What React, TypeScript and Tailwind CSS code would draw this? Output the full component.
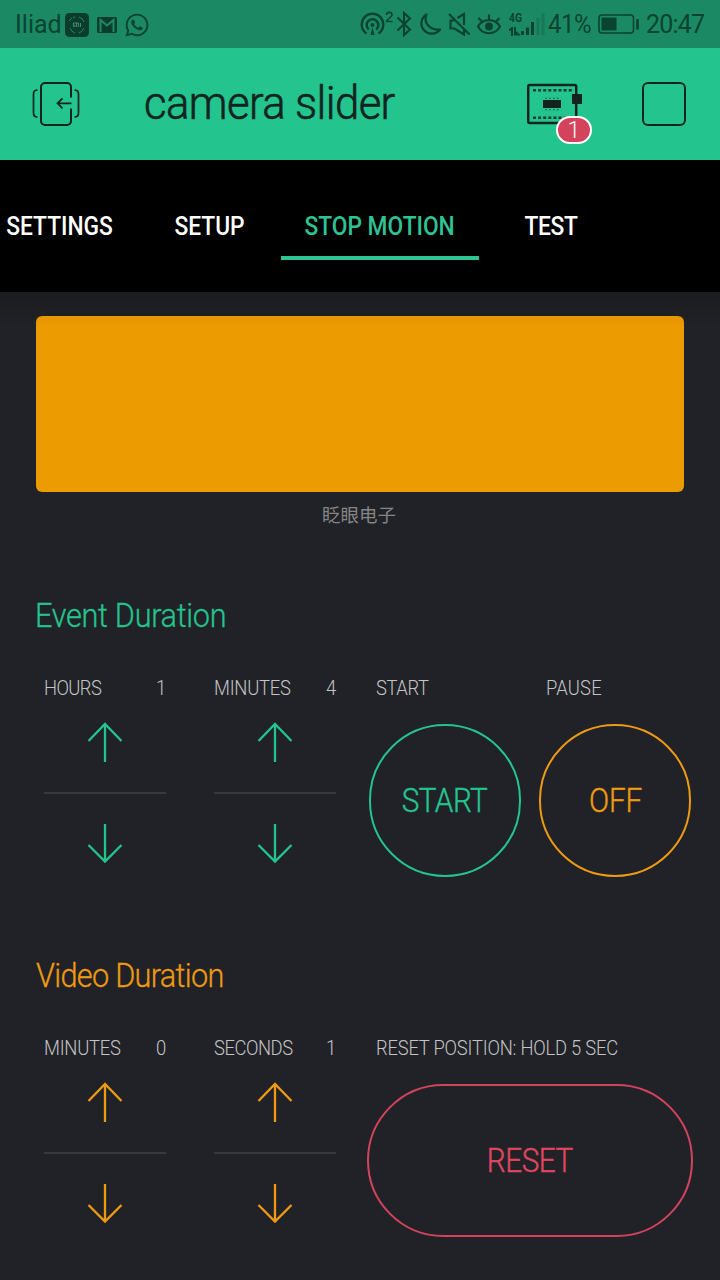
import React from "react";
import { FaWhatsapp } from "react-icons/fa";

const GREEN = "#24c48e";
const ORANGE = "#ee9a12";

function StatusBar() {
  return (
    <div className="flex h-12 items-center bg-[#1b8a64] text-[25px] leading-[30px] text-[#0b4331]">
      <span className="ml-[15px] mt-0.5 w-[50px]">Iliad</span>
      <svg className="mt-0.5" width="24" height="24" viewBox="0 0 24 24">
        <rect width="24" height="24" rx="4.500" fill="#0b3d2d" />
        <path d="M4 8l3-3M5 15a8 8 0 0 0 5 5M14 20a8 8 0 0 0 5-5M14 4a8 8 0 0 1 5 5M8 4.500l2-.5" fill="none" stroke="#1b8a64" strokeWidth="1" />
        <path d="M8.500 14v-4h3v4M11.500 10h2v4M15.500 10v4M10 12v2" fill="none" stroke="#4f9f86" strokeWidth=".8" />
      </svg>
      <svg className="ml-2 mt-0.5" width="20" height="16" viewBox="0 0 20 16">
        <rect width="20" height="16" rx="1.500" fill="#0b3d2d" />
        <path d="M3.500 15V3l6.500 5.500L16.500 3v12" fill="none" stroke="#1b8a64" strokeWidth="2" />
      </svg>
      <FaWhatsapp className="ml-[7px] mt-px" size={26} />
      <div className="ml-auto flex h-12 items-center">
        <svg width="34" height="48" viewBox="360 0 34 48" fill="none" stroke="currentColor" strokeWidth="2.400">
          <path d="M366.500 33.500A10.800 10.800 0 1 1 378.500 33.500" />
          <path d="M368.800 29.500A5.800 5.800 0 1 1 376.200 29.500" />
          <circle cx="372.500" cy="25" r="2" fill="currentColor" stroke="none" />
          <path d="M370.500 35l2-8 2 8z" fill="currentColor" stroke="none" />
          <path d="M386.500 15c.5-3.500 5.500-3.500 5.500 0 0 2-5.500 4.500-5.500 6.500h6" strokeWidth="1.600" />
        </svg>
        <svg className="ml-0.5" width="18" height="48" viewBox="396 0 18 48" fill="none" stroke="currentColor" strokeWidth="2.100">
          <path d="M397.500 17.500l12.500 12-6 5.500V13l6 5.500-12.500 12" />
        </svg>
        <svg className="ml-[3px]" width="26" height="48" viewBox="417 0 26 48" fill="none" stroke="currentColor" strokeWidth="2.200" strokeLinejoin="round">
          <path d="M426.500 14.500A10.300 10.300 0 1 0 440 29.500C430 30.500 423 23 426.500 14.500z" />
        </svg>
        <svg className="ml-1" width="26" height="48" viewBox="447 0 26 48" fill="none" stroke="currentColor" strokeWidth="2.200">
          <path d="M449 14l20.500 20.500M454 20.500h-3.500v8h4l9.500 6v-6M457.500 18l6.500-4v11" />
        </svg>
        <svg className="ml-[3px]" width="26" height="48" viewBox="476 0 26 48" fill="none" stroke="currentColor" strokeWidth="2.200">
          <path d="M478 26.500c5-8.500 17-8.500 22 0-5 9-17 9-22 0zM478.500 18l3.500 3.500M489 14.500v5M499.500 18l-3.500 3.500" />
          <circle cx="489" cy="26.500" r="4" fill="currentColor" stroke="none" />
        </svg>
        <div className="ml-[7px] flex h-12 w-[11px] flex-col pt-[11px] text-[13px] font-bold leading-[14px]">
          <span className="origin-left scale-x-[.8]">4G</span>
          <svg className="mt-0.5" width="12" height="9" viewBox="0 0 12 9" fill="none" stroke="currentColor" strokeWidth="2">
            <path d="M0 3.500L3 1v8M6 0v7.500h3.500L7 5" />
          </svg>
        </div>
        <svg width="25" height="48" viewBox="520 0 25 48" fill="currentColor">
          <path d="M521 31h3v4h-3zM526 27.500h3V35h-3zM531 22h3v13h-3z" />
          <path d="M536.500 18h3v17h-3zM541.500 13.500h3V35h-3z" opacity=".25" />
        </svg>
        <span className="ml-[3px] mt-0.5 w-[44px] origin-left scale-x-[.96] tracking-[-.5px]">41%</span>
        <svg className="ml-[6px]" width="42" height="48" viewBox="598 0 42 48" fill="none" stroke="currentColor">
          <rect x="599" y="15" width="34.500" height="18" rx="3" strokeWidth="1.600" />
          <path d="M601.500 17.500H616.500V30.500H601.500z" fill="currentColor" stroke="none" />
          <path d="M637.500 19v10.500" strokeWidth="2.600" />
        </svg>
        <span className="ml-[6px] mt-0.5 w-[74px] tracking-[-.8px]">20:47</span>
      </div>
    </div>
  );
}

function Header() {
  return (
    <header className="flex h-28 items-center bg-[#24c48e] text-[#13241f]">
      <svg className="ml-8" width="48" height="48" viewBox="32 80 48 48" fill="none" stroke="currentColor" strokeWidth="2">
        <path d="M71 97.500V87a4 4 0 0 0-4-4H45a4 4 0 0 0-4 4v34a4 4 0 0 0 4 4h22a4 4 0 0 0 4-4v-12.500" />
        <path d="M37.500 90c-2.500 0-4 1.500-4 4v19c0 2.500 1.500 4 4 4M74.500 90c2.500 0 4 1.500 4 4v19c0 2.500-1.500 4-4 4" strokeWidth="1.700" />
        <path d="M71.500 103.300H57.500M62.500 98.300l-5 5 5 5" strokeWidth="1.700" />
      </svg>
      <h1 className="-mt-0.5 ml-[64px] w-[383px] origin-left scale-x-[.95] whitespace-nowrap text-[46px] font-light leading-[56px] tracking-[-.64px] [-webkit-text-stroke:.6px_#13241f]">camera slider</h1>
      <div className="relative h-12 w-[66px]">
        <svg width="66" height="48" viewBox="527 80 66 48" fill="none" stroke="currentColor">
          <rect x="528.200" y="85" width="48" height="38" rx="1.500" strokeWidth="2.500" />
          <path d="M533 90.300h39M533 117.700h39" strokeWidth="2.400" strokeDasharray="3 2.100" opacity=".85" />
          <path d="M543 100h18v8h-18z" fill="currentColor" stroke="none" />
          <path d="M545.500 98.300h14M545.500 109.700h14" strokeWidth="1.200" strokeDasharray="1.500 2.300" opacity=".6" />
          <path d="M572 94h10v10h-10z" fill="currentColor" stroke="none" />
        </svg>
        <span className="absolute left-[29px] top-9 flex h-7 w-9 items-center justify-center rounded-full border-2 border-white bg-[#d3435c] text-[23px] font-light leading-none text-white">1</span>
      </div>
      <div className="ml-[49px] size-11 rounded-md border-2 border-[#13241f]" />
    </header>
  );
}

function Tab({ label, className, active }: { label: string; className: string; active?: boolean }) {
  return (
    <div className={`flex h-12 shrink-0 justify-center border-b-4 ${active ? "border-[#2fc293] text-[#2fc293]" : "border-transparent text-white"} ${className}`}>
      <span className="scale-x-[.91] whitespace-nowrap text-[25px] font-medium leading-[30px]">{label}</span>
    </div>
  );
}

function Stepper({ label, value, color, tracking }: { label: string; value: number; color: string; tracking: string }) {
  return (
    <div className="w-[122px]">
      <div className="flex h-6 justify-between text-xl font-light leading-6 text-[#c4c4c5]">
        <span className={`origin-left scale-x-[.92] ${tracking}`}>{label}</span>
        <span className="origin-right scale-x-[.92]">{value}</span>
      </div>
      <svg className="mx-auto mt-[22px]" width="36" height="42" viewBox="0 0 36 42" fill="none" stroke={color} strokeWidth="2.300">
        <path d="M18 40V2M1.500 19L18 2l16.500 17" />
      </svg>
      <div className="mt-7 h-0.5 bg-[#39393d]" />
      <svg className="mx-auto mt-7" width="36" height="42" viewBox="0 0 36 42" fill="none" stroke={color} strokeWidth="2.300">
        <path d="M18 2v37.500M1.500 23L18 39.500 34.500 23" />
      </svg>
    </div>
  );
}

function WidgetButton({ label, text, className, buttonClass, textClass, tracking }: { label: string; text: string; className: string; buttonClass: string; textClass: string; tracking: string }) {
  return (
    <div className={className}>
      <div className={`ml-2 h-6 origin-left scale-x-[.92] whitespace-nowrap text-xl font-light leading-6 text-[#c4c4c5] ${tracking}`}>{label}</div>
      <button className={`mt-6 flex h-[153px] items-center justify-center rounded-[77px] border-2 text-[33px] font-light leading-10 ${buttonClass}`}>
        <span className={`scale-x-[.9] [-webkit-text-stroke:.4px_currentColor] ${textClass}`}>{text}</span>
      </button>
    </div>
  );
}

export default function App() {
  return (
    <div className="h-[1280px] w-[720px] overflow-hidden bg-[#212227] font-[Roboto,'Noto_Sans_CJK_SC',sans-serif]">
      <StatusBar />
      <Header />
      <nav className="flex h-[132px] overflow-hidden bg-black pt-[52px]">
        <Tab label="SETTINGS" className="-ml-[18px] w-[156px]" />
        <Tab label="SETUP" className="ml-3 w-[119px]" />
        <Tab label="STOP MOTION" className="ml-3 w-[198px]" active />
        <Tab label="TEST" className="ml-3 w-[120px] tracking-[-.4px]" />
      </nav>
      <main className="bg-linear-to-b from-[#1b1c1f] to-[#212227] to-[36px]">
        <div className="px-9 pt-6">
          <div className="h-44 rounded-md bg-linear-to-b from-[#e59700] to-[#ec9c00] to-[12px]" />
        </div>
        <p className="-ml-0.5 mt-2 h-8 text-center text-[18.500px] leading-8 text-[#858585]">眨眼电子</p>

        <section className="mt-16 h-[360px]">
          <h2 className="ml-[35px] origin-left scale-x-[.93] text-[33px] font-light leading-10 tracking-[-.34px] text-[#24c48e] [-webkit-text-stroke:.3px_currentColor]">Event Duration</h2>
          <div className="mt-10 flex pl-11">
            <Stepper label="HOURS" value={1} color={GREEN} tracking="tracking-[-.65px]" />
            <div className="w-12" />
            <Stepper label="MINUTES" value={4} color={GREEN} tracking="tracking-[-.28px]" />
            <WidgetButton label="START" text="START" className="ml-8 w-[170px]" buttonClass="ml-px w-[152px] border-[#24c48e] text-[#24c48e]" textClass="tracking-[-.6px]" tracking="tracking-[-.45px]" />
            <WidgetButton label="PAUSE" text="OFF" className="w-[170px]" buttonClass="ml-px w-[152px] border-[#ee9a12] text-[#ee9a12]" textClass="tracking-[-.2px]" tracking="tracking-[.2px]" />
          </div>
        </section>

        <section className="h-[360px]">
          <h2 className="ml-9 origin-left scale-x-[.93] text-[33px] font-light leading-10 tracking-[-.76px] text-[#ee9a12] [-webkit-text-stroke:.3px_currentColor]">Video Duration</h2>
          <div className="mt-10 flex pl-11">
            <Stepper label="MINUTES" value={0} color={ORANGE} tracking="tracking-[-.28px]" />
            <div className="w-12" />
            <Stepper label="SECONDS" value={1} color={ORANGE} tracking="tracking-[-.5px]" />
            <WidgetButton label="RESET POSITION: HOLD 5 SEC" text="RESET" className="ml-8 w-[340px]" buttonClass="-ml-px w-[326px] border-[#d3435c] text-[#e0475f]" textClass="tracking-[-.5px]" tracking="tracking-[-.24px]" />
          </div>
        </section>
      </main>
    </div>
  );
}
